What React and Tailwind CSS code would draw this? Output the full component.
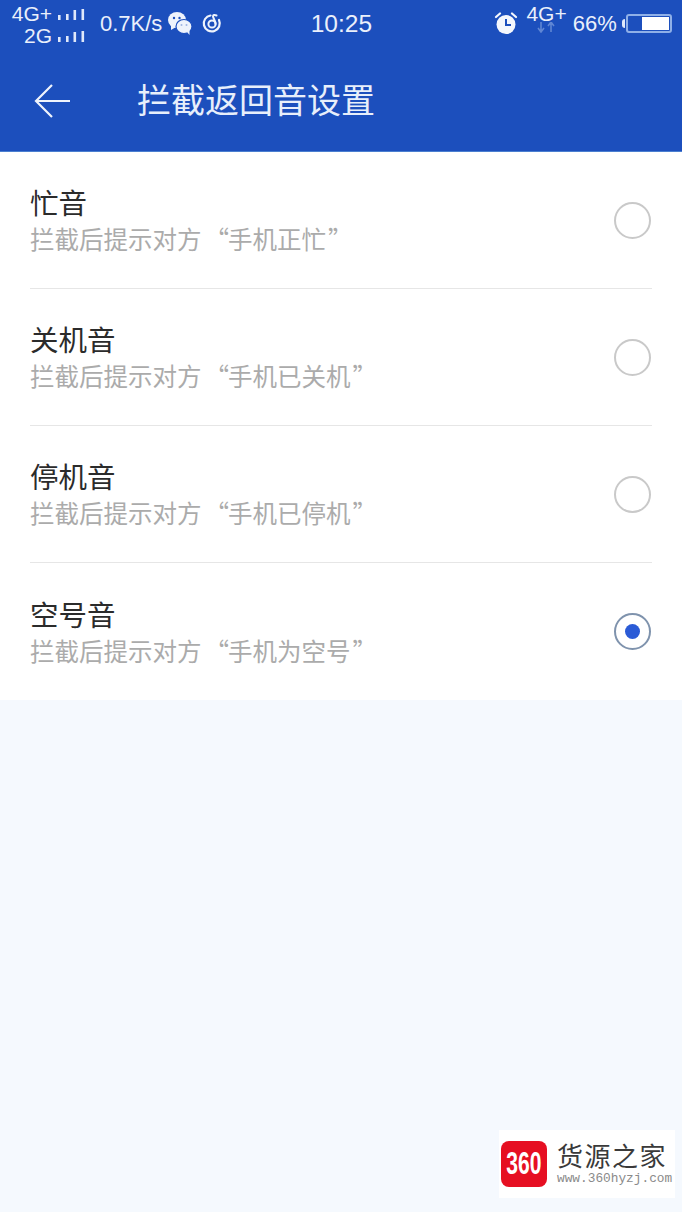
import React from 'react';

const cjk = "font-['Noto_Sans_CJK_SC','Noto_Sans',sans-serif]";
const latin = "font-['Liberation_Sans','Noto_Sans_CJK_SC',sans-serif]";

const options = [
  { name: '忙音', tip: '手机正忙' },
  { name: '关机音', tip: '手机已关机' },
  { name: '停机音', tip: '手机已停机' },
  { name: '空号音', tip: '手机为空号', checked: true },
];

// 信号格
const Signal = () => (
  <svg width="28" height="14" viewBox="0 0 28 14" className="block">
    <rect x="1" y="8" width="2.600" height="5" fill="#dfe8fa" />
    <rect x="9" y="7" width="2.600" height="6" fill="#dfe8fa" />
    <rect x="16.500" y="3" width="2.600" height="10" fill="#dfe8fa" />
    <rect x="24.500" y="2" width="2.600" height="11" fill="#dfe8fa" />
  </svg>
);

const WeChat = () => (
  <svg width="26" height="26" viewBox="0 0 26 26" className="block">
    <ellipse cx="10" cy="10" rx="9" ry="8" fill="#eef3fc" />
    <path d="M4 15 L4 20 L9 17 Z" fill="#eef3fc" />
    <ellipse cx="17" cy="16.500" rx="8" ry="7" fill="#eef3fc" stroke="#1c4fbd" strokeWidth="1.200" />
    <path d="M20 22 L22.500 25 L22.500 20 Z" fill="#eef3fc" />
    <circle cx="7" cy="8" r="1.200" fill="#1c4fbd" />
    <circle cx="12.500" cy="8" r="1.200" fill="#1c4fbd" />
    <circle cx="14.500" cy="15" r="1" fill="#9fb6e3" />
    <circle cx="19.500" cy="15" r="1" fill="#9fb6e3" />
  </svg>
);

const Netease = () => (
  <svg width="22" height="22" viewBox="0 0 22 22" fill="none" className="block">
    <path d="M9.500 3.500 A8 8 0 1 0 18 8" stroke="#eef3fc" strokeWidth="2.200" strokeLinecap="round" />
    <circle cx="11" cy="12" r="3.600" stroke="#eef3fc" strokeWidth="2" />
    <path d="M14.500 12 C14.500 8.500 12.500 7 12 4.500 C12 3 13.500 2.500 15.500 3.500" stroke="#eef3fc" strokeWidth="2" strokeLinecap="round" />
  </svg>
);

const Alarm = () => (
  <svg width="24" height="24" viewBox="0 0 24 24" className="block">
    <circle cx="12" cy="13.500" r="9.500" fill="#f4f7fd" />
    <path d="M2 6 L6 2.500 M22 6 L18 2.500" stroke="#f4f7fd" strokeWidth="2.200" strokeLinecap="round" />
    <path d="M12 8 V14 H17" stroke="#1c4fbd" strokeWidth="2" fill="none" />
  </svg>
);

// frecce dati sotto 4G+
const DataArrows = () => (
  <svg width="18" height="11" viewBox="0 0 18 11" fill="none" className="absolute left-[11px] top-[24px]">
    <path d="M4 0 V9 M1 6 L4 10 L7 6 M14 10 V1 M11 4 L14 0 L17 4" stroke="#5f86d4" strokeWidth="1.600" />
  </svg>
);

const Battery = () => (
  <div className="flex items-center ml-[5px]">
    <div className="w-[3px] h-[9px] bg-[#dfe8fa] rounded-l-sm" />
    <div className="w-[46px] h-[19px] ml-[1px] border-2 border-[#8fb0e8] rounded-[3px] flex justify-end p-[1px]">
      <div className="w-[27px] bg-white" />
    </div>
  </div>
);

const Radio = ({ checked }) => (
  <div className={`w-[37px] h-[37px] mr-[1px] rounded-full border-2 flex items-center justify-center ${checked ? 'border-[#7f93ad]' : 'border-[#c9c9c9]'}`}>
    {checked && <div className="w-[15px] h-[15px] rounded-full bg-[#2b5bd6]" />}
  </div>
);

const Row = ({ name, tip, checked, last }) => (
  <div className={`h-[137px] ml-[30px] mr-[30px] flex items-center justify-between ${last ? '' : 'border-b border-[#e6e6e6]'}`}>
    <div className={`flex flex-col -mt-[1px] ${cjk}`}>
      <div className="text-[28.500px] leading-[36px] mb-[3px] text-[#2b2b2b]">{name}</div>
      <div className="text-[24.500px] leading-[32px] text-[#ababab] whitespace-nowrap">
        拦截后提示对方<span className="ml-[3px]">“</span><span className="-ml-[1px]">{tip}</span><span className="ml-[2px]">”</span>
      </div>
    </div>
    <Radio checked={checked} />
  </div>
);

export default function App() {
  return (
    <div className="relative w-[682px] h-[1212px] overflow-hidden bg-[#f5f9fe]">
      <div className="bg-[#1c4fbd] h-[152px] border-b border-[#4b7fd0] flex flex-col">
        {/* barra di stato */}
        <div className={`h-[46px] flex items-center text-[#eaf0fb] ${latin}`}>
          <div className="w-[85px] mt-[4px] flex flex-col items-end text-[21px] leading-[22px]">
            <div className="flex items-center gap-[5px]"><span>4G+</span><Signal /></div>
            <div className="flex items-center gap-[5px]"><span>2G</span><Signal /></div>
          </div>
          <span className="ml-[15px] text-[22px]">0.7K/s</span>
          <span className="ml-[5px]"><WeChat /></span>
          <span className="ml-[8px]"><Netease /></span>
          <span className="ml-[87px] mt-[2px] text-[24.500px] w-[62px] text-center">10:25</span>
          <span className="ml-[122px]"><Alarm /></span>
          <span className="relative ml-[8px] text-[21px] -mt-[18px]">
            4G+
            <DataArrows />
          </span>
          <span className="ml-[6px] text-[22px]">66%</span>
          <Battery />
        </div>
        {/* titolo */}
        <div className="flex-1 flex items-center">
          <svg width="38" height="36" viewBox="0 0 38 36" fill="none" className="ml-[34px] mt-[4px]">
            <path d="M18 2 L2 18 L18 34 M2 18 H36" stroke="#eef3fc" strokeWidth="2.200" />
          </svg>
          <div className={`ml-[65px] text-[34px] leading-[44px] text-[#e8effb] ${cjk}`}>拦截返回音设置</div>
        </div>
      </div>

      <div className="bg-white">
        {options.map((o, i) => (
          <Row key={o.name} {...o} last={i === options.length - 1} />
        ))}
      </div>

      {/* watermark */}
      <div className="absolute left-[499px] top-[1130px] w-[176px] h-[68px] bg-white flex items-center">
        <div className="ml-[2px] w-[46px] h-[46px] rounded-[8px] bg-[#e60f22] flex items-center justify-center overflow-hidden">
          <span className="text-white text-[31px] font-bold scale-x-[0.68] font-['Liberation_Sans',sans-serif]">360</span>
        </div>
        <div className="ml-[10px] flex flex-col">
          <div className="text-[26px] leading-[30px] -mt-[1px] tracking-[1.500px] text-[#3a3a3a] font-['Noto_Sans_CJK_SC',sans-serif]">货源之家</div>
          <div className="text-[12.800px] leading-[16px] mt-[1px] text-[#8a8a8a] whitespace-nowrap font-['Liberation_Mono',monospace]">www.360hyzj.com</div>
        </div>
      </div>
    </div>
  );
}
